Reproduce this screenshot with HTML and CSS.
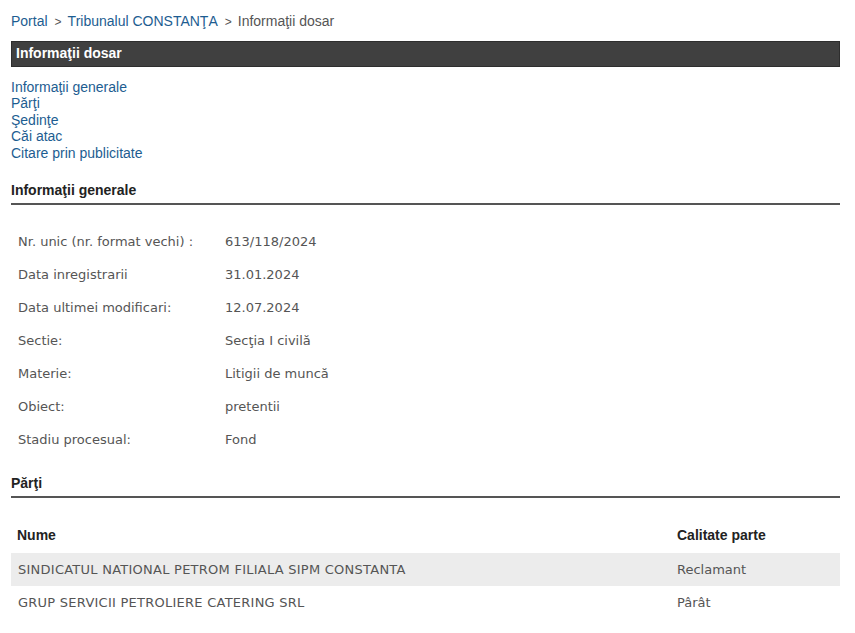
FILE: index.html
```html
<!DOCTYPE html>
<html lang="ro">
<head>
<meta charset="utf-8">
<title>Informaţii dosar</title>
<link rel="stylesheet" href="styles.css">
</head>
<body>
<div class="page">
  <div class="crumbs">
    <a href="#">Portal</a><span class="sep">&gt;</span><a href="#">Tribunalul CONSTANŢA</a><span class="sep">&gt;</span><span class="cur">Informaţii dosar</span>
  </div>
  <div class="bar">Informaţii dosar</div>
  <ul class="toc">
    <li><a href="#">Informaţii generale</a></li>
    <li><a href="#">Părţi</a></li>
    <li><a href="#">Şedinţe</a></li>
    <li><a href="#">Căi atac</a></li>
    <li><a href="#">Citare prin publicitate</a></li>
  </ul>
  <h2 class="sect">Informaţii generale</h2>
  <div class="info">
    <div class="row"><span class="lbl">Nr. unic (nr. format vechi) :</span><span class="val">613/118/2024</span></div>
    <div class="row"><span class="lbl">Data inregistrarii</span><span class="val">31.01.2024</span></div>
    <div class="row"><span class="lbl">Data ultimei modificari:</span><span class="val">12.07.2024</span></div>
    <div class="row"><span class="lbl">Sectie:</span><span class="val">Secţia I civilă</span></div>
    <div class="row"><span class="lbl">Materie:</span><span class="val">Litigii de muncă</span></div>
    <div class="row"><span class="lbl">Obiect:</span><span class="val">pretentii</span></div>
    <div class="row"><span class="lbl">Stadiu procesual:</span><span class="val">Fond</span></div>
  </div>
  <h2 class="sect sect2">Părţi</h2>
  <table class="parti">
    <thead>
      <tr><th class="c1">Nume</th><th class="c2">Calitate parte</th></tr>
    </thead>
    <tbody>
      <tr class="alt"><td class="c1">SINDICATUL NATIONAL PETROM FILIALA SIPM CONSTANTA</td><td class="c2">Reclamant</td></tr>
      <tr><td class="c1">GRUP SERVICII PETROLIERE CATERING SRL</td><td class="c2">Pârât</td></tr>
    </tbody>
  </table>
</div>
</body>
</html>
```
FILE: styles.css
```css
html, body {
  margin: 0;
  padding: 0;
  background: #ffffff;
}
.page {
  padding: 12px 15px 0 11px;
  font-family: "Liberation Sans", Arial, sans-serif;
  font-size: 14px;
  color: #333;
}
a {
  color: #1d5d91;
  text-decoration: none;
}
.crumbs {
  line-height: 18px;
  color: #555;
}
.crumbs .sep {
  margin: 0 6px 0 7px;
  font-size: 12px;
  color: #555;
}
.crumbs .cur {
  color: #555;
}
.bar {
  margin-top: 10px;
  height: 24px;
  line-height: 23px;
  background: #404040;
  border: 1px solid #2e2e2e;
  color: #fff;
  font-weight: bold;
  font-size: 14px;
  padding-left: 4px;
}
.toc {
  list-style: none;
  margin: 12px 0 0 0;
  padding: 0;
  line-height: 16.4px;
}
.sect {
  margin: 20px 0 0 0;
  font-size: 14px;
  font-weight: bold;
  color: #222;
  line-height: 18px;
  padding-bottom: 4px;
  border-bottom: 2px solid #555;
}
.info {
  padding: 29px 0 0 7px;
  font-family: "DejaVu Sans", sans-serif;
  font-size: 13px;
  color: #555;
}
.row {
  display: flex;
  height: 33px;
  line-height: 16px;
}
.lbl {
  width: 207px;
}
.sect2 {
  margin-top: 9px;
}
.parti {
  width: 100%;
  border-collapse: collapse;
  margin-top: 19px;
}
.parti th {
  text-align: left;
  font-weight: bold;
  color: #222;
  font-size: 14px;
  height: 36px;
  padding: 0 0 0 6px;
  vertical-align: middle;
}
.parti td {
  font-family: "DejaVu Sans", sans-serif;
  font-size: 13px;
  color: #555;
  height: 33px;
  padding: 0 0 0 7px;
  vertical-align: middle;
}
.parti td.c1 {
  letter-spacing: 0.25px;
}
.parti .c2 {
  width: 163px;
  padding-left: 6px;
}
.parti tr.alt td {
  background: #ececec;
}
```
